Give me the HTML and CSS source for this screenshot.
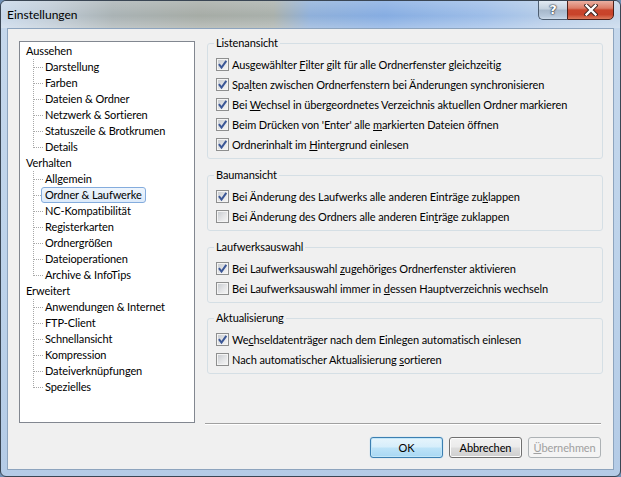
FILE: index.html
```html
<!DOCTYPE html>
<html lang="de">
<head>
<meta charset="utf-8">
<title>Einstellungen</title>
<link rel="stylesheet" href="styles.css">
</head>
<body>
<div class="window">
  <div class="titlebar">
    <div class="title">Einstellungen</div>
    <div class="caption">
      <div class="cap help"><span class="qmark">?</span></div>
      <div class="cap close">
        <svg width="14" height="12" viewBox="0 0 14 12"><path d="M2.5 1.5 L11.5 10.5 M11.5 1.5 L2.5 10.5" stroke="#3a2420" stroke-width="4.2" stroke-linecap="square" fill="none"/><path d="M2.5 1.5 L11.5 10.5 M11.5 1.5 L2.5 10.5" stroke="#ffffff" stroke-width="2.4" stroke-linecap="square" fill="none"/></svg>
      </div>
    </div>
  </div>
  <div class="client">
    <div class="main">
      <div class="tree">
        <div class="root"><span class="lbl">Aussehen</span></div>
        <div class="node"><span class="lbl">Darstellung</span></div>
        <div class="node"><span class="lbl">Farben</span></div>
        <div class="node"><span class="lbl">Dateien &amp; Ordner</span></div>
        <div class="node"><span class="lbl">Netzwerk &amp; Sortieren</span></div>
        <div class="node"><span class="lbl">Statuszeile &amp; Brotkrumen</span></div>
        <div class="node last"><span class="lbl">Details</span></div>
        <div class="root"><span class="lbl">Verhalten</span></div>
        <div class="node"><span class="lbl">Allgemein</span></div>
        <div class="node"><span class="lbl selected">Ordner &amp; Laufwerke</span></div>
        <div class="node"><span class="lbl">NC-Kompatibilität</span></div>
        <div class="node"><span class="lbl">Registerkarten</span></div>
        <div class="node"><span class="lbl">Ordnergrößen</span></div>
        <div class="node"><span class="lbl">Dateioperationen</span></div>
        <div class="node last"><span class="lbl">Archive &amp; InfoTips</span></div>
        <div class="root"><span class="lbl">Erweitert</span></div>
        <div class="node"><span class="lbl">Anwendungen &amp; Internet</span></div>
        <div class="node"><span class="lbl">FTP-Client</span></div>
        <div class="node"><span class="lbl">Schnellansicht</span></div>
        <div class="node"><span class="lbl">Kompression</span></div>
        <div class="node"><span class="lbl">Dateiverknüpfungen</span></div>
        <div class="node last"><span class="lbl">Spezielles</span></div>
      </div>
      <div class="panel">
        <fieldset class="group">
          <legend>Listenansicht</legend>
          <div class="row"><span class="cb checked"><svg viewBox="0 0 11 11"><polyline points="1.9,5.2 4.5,8.5 9.3,1.9"/></svg></span><span>Ausgewählter <u>F</u>ilter gilt für alle Ordnerfenster gleichzeitig</span></div>
          <div class="row"><span class="cb checked"><svg viewBox="0 0 11 11"><polyline points="1.9,5.2 4.5,8.5 9.3,1.9"/></svg></span><span>Spa<u>l</u>ten zwischen Ordnerfenstern bei Änderungen synchronisieren</span></div>
          <div class="row"><span class="cb checked"><svg viewBox="0 0 11 11"><polyline points="1.9,5.2 4.5,8.5 9.3,1.9"/></svg></span><span>Bei <u>W</u>echsel in übergeordnetes Verzeichnis aktuellen Ordner markieren</span></div>
          <div class="row"><span class="cb checked"><svg viewBox="0 0 11 11"><polyline points="1.9,5.2 4.5,8.5 9.3,1.9"/></svg></span><span>Beim Drücken von 'Enter' alle <u>m</u>arkierten Dateien öffnen</span></div>
          <div class="row"><span class="cb checked"><svg viewBox="0 0 11 11"><polyline points="1.9,5.2 4.5,8.5 9.3,1.9"/></svg></span><span>Ordnerinhalt im <u>H</u>intergrund einlesen</span></div>
        </fieldset>
        <fieldset class="group">
          <legend>Baumansicht</legend>
          <div class="row"><span class="cb checked"><svg viewBox="0 0 11 11"><polyline points="1.9,5.2 4.5,8.5 9.3,1.9"/></svg></span><span>Bei Änderung des Laufwerks alle anderen Einträge zu<u>k</u>lappen</span></div>
          <div class="row"><span class="cb"></span><span>Bei Änderung des Ordners alle anderen Ein<u>t</u>räge zuklappen</span></div>
        </fieldset>
        <fieldset class="group">
          <legend>Laufwerksauswahl</legend>
          <div class="row"><span class="cb checked"><svg viewBox="0 0 11 11"><polyline points="1.9,5.2 4.5,8.5 9.3,1.9"/></svg></span><span>Bei Laufwerksauswahl <u>z</u>ugehöriges Ordnerfenster aktivieren</span></div>
          <div class="row"><span class="cb"></span><span>Bei Laufwerksauswahl immer in <u>d</u>essen Hauptverzeichnis wechseln</span></div>
        </fieldset>
        <fieldset class="group last-group">
          <legend>Aktualisierung</legend>
          <div class="row"><span class="cb checked"><svg viewBox="0 0 11 11"><polyline points="1.9,5.2 4.5,8.5 9.3,1.9"/></svg></span><span>We<u>c</u>hseldatenträger nach dem Einlegen automatisch einlesen</span></div>
          <div class="row"><span class="cb"></span><span>Nach automatischer Aktualisierung <u>s</u>ortieren</span></div>
        </fieldset>
      </div>
    </div>
    <div class="separator"></div>
    <div class="buttons">
      <div class="btn default">OK</div>
      <div class="btn">Abbrechen</div>
      <div class="btn disabled"><u>Ü</u>bernehmen</div>
    </div>
  </div>
</div>
</body>
</html>
```
FILE: styles.css
```css
html, body {
  margin: 0;
  padding: 0;
  background: #6f8fb4;
}
body {
  width: 621px;
  height: 477px;
  overflow: hidden;
  font-family: Lato, "Liberation Sans", sans-serif;
  font-size: 11px;
  letter-spacing: -0.1px;
  color: #000;
}
.window {
  box-sizing: border-box;
  width: 621px;
  height: 477px;
  display: flex;
  flex-direction: column;
  border: 1px solid #3a4654;
  border-radius: 6px;
  padding: 0 6px 6px 6px;
  background: linear-gradient(to bottom, #c6d8ec 0%, #bcd2ea 60%, #b4cbe6 100%);
  overflow: hidden;
}
.titlebar {
  height: 27px;
  margin: 0 -6px;
  display: flex;
  background:
    linear-gradient(to bottom, rgba(255,255,255,0.18) 0%, rgba(255,255,255,0) 55%, rgba(255,255,255,0.25) 100%),
    linear-gradient(to right, #c8d8ea 0%, #bfcbd6 8%, #aab3b5 18%, #a6aca6 32%, #a9b0ab 44%, #8fb0da 50%, #86ade2 62%, #9dbde8 78%, #b5cce8 88%, #c4d6ea 100%);
  border-radius: 5px 5px 0 0;
}
.title {
  padding: 6px 0 0 6px;
  font-size: 12px;
  line-height: 16px;
  letter-spacing: 0;
  color: #000;
}
.caption {
  display: flex;
  margin: -1px 6px 0 auto;
  align-self: flex-start;
}
.cap {
  box-sizing: border-box;
  height: 20px;
  display: flex;
  align-items: center;
  justify-content: center;
}
.help {
  width: 29px;
  border: 1px solid #4d5d70;
  border-right: none;
  border-radius: 0 0 0 5px;
  background: linear-gradient(to bottom, #e2eaf3 0%, #c3d0de 45%, #a6b7ca 50%, #b7c8db 85%, #cddbea 100%);
}
.qmark {
  font-family: "DejaVu Sans", sans-serif;
  font-weight: bold;
  font-size: 13px;
  line-height: 14px;
  color: #fff;
  text-shadow: 0 0 1px #2a3340, 0 0 1px #2a3340, 0 0 2px #2a3340;
}
.close {
  width: 47px;
  border: 1px solid #4c2019;
  border-radius: 0 0 5px 0;
  background: linear-gradient(to bottom, #eab0a2 0%, #dc7c66 40%, #c9452c 50%, #c8432a 75%, #dc7a5c 100%);
}
.close svg {
  display: block;
}
.client {
  flex: 1;
  display: flex;
  flex-direction: column;
  background: #f0f0f0;
  border: 1px solid #8da4be;
  padding: 7px 10px 0 11px;
}
.main {
  display: flex;
  align-items: flex-start;
}
.tree {
  box-sizing: border-box;
  width: 176px;
  height: 382px;
  margin-top: 5px;
  border: 1px solid #828790;
  background: #fff;
  padding: 1px 0 0 6px;
}
.root, .node {
  height: 16px;
  display: flex;
  align-items: center;
}
.root .lbl {
  margin-left: -4px;
}
.lbl {
  box-sizing: border-box;
  height: 16px;
  line-height: 14px;
  padding: 0 3px;
  border: 1px solid transparent;
  white-space: nowrap;
}
.node {
  padding-left: 15px;
  background-image:
    repeating-linear-gradient(to bottom, #a8a8a8 0 1px, transparent 1px 2px),
    repeating-linear-gradient(to right, #a8a8a8 0 1px, transparent 1px 2px);
  background-size: 1px 16px, 9px 1px;
  background-position: 7px 0, 8px 8px;
  background-repeat: no-repeat;
}
.node.last {
  background-size: 1px 9px, 9px 1px;
}
.lbl.selected {
  border-color: #84acdd;
  border-radius: 3px;
  background: linear-gradient(to bottom, #eef5fd 0%, #dceafa 100%);
}
.panel {
  flex: 1;
  margin-left: 12px;
  display: flex;
  flex-direction: column;
}
.group {
  margin: 9px 0 0 0;
  padding: 4px 8px 4px 8px;
  border: 1px solid #d5dfe5;
  border-radius: 3px;
  min-width: 0;
}
.group:first-child {
  margin-top: 0;
}
.group.last-group {
  margin-top: 8px;
}
legend {
  padding: 0 2px;
  margin-left: -2px;
  line-height: 14px;
}
.row {
  height: 20px;
  display: flex;
  align-items: center;
  white-space: nowrap;
}
.cb {
  box-sizing: border-box;
  width: 13px;
  height: 13px;
  flex: none;
  margin-right: 3px;
  border: 1px solid #8e8f8f;
  background: linear-gradient(135deg, #c4c8cd 0%, #e4e5e7 55%, #f7f7f7 100%);
  box-shadow: inset 0 0 0 1px #f4f4f4;
}
.cb svg {
  display: block;
  width: 11px;
  height: 11px;
}
.cb polyline {
  fill: none;
  stroke: #3b5796;
  stroke-width: 2;
}
.separator {
  margin: 0 2px 0 186px;
  border-top: 1px solid #a0a0a0;
  border-bottom: 1px solid #ffffff;
}
.buttons {
  display: flex;
  justify-content: flex-end;
  gap: 6px;
  margin-top: 12px;
  padding-right: 2px;
}
.btn {
  box-sizing: border-box;
  width: 73px;
  height: 21px;
  display: flex;
  align-items: center;
  justify-content: center;
  border: 1px solid #707070;
  border-radius: 3px;
  background: linear-gradient(to bottom, #f2f2f2 0%, #ebebeb 48%, #dddddd 52%, #cfcfcf 100%);
  box-shadow: inset 0 0 0 1px #fcfcfc;
}
.btn.default {
  border-color: #3c7fb1;
  background: linear-gradient(to bottom, #e6f4fc 0%, #d6eefb 48%, #bde3f8 52%, #a9d8f3 100%);
  box-shadow: inset 0 0 0 1px #c2e6f8, 0 0 1px #6bb6e6;
}
.btn.disabled {
  color: #a0a0a0;
  border-color: #adb2b5;
  background: #f4f4f4;
  box-shadow: none;
}
```
